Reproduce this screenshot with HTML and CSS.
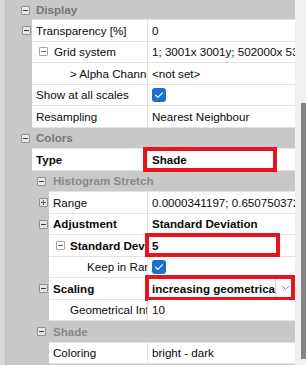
FILE: index.html
```html
<!DOCTYPE html>
<html>
<head>
<meta charset="utf-8">
<link rel="stylesheet" href="styles.css">
</head>
<body>
<div class="frame">
  <div class="grid">
    <div class="row hdr top">
      <div class="gut g32"><span class="exp i21"></span></div>
      <div class="hcell">Display</div>
    </div>
    <div class="row">
      <div class="gut g32"><span class="exp i22"></span></div>
      <div class="name w32 p4">Transparency [%]</div>
      <div class="value"><span class="txt">0</span></div>
    </div>
    <div class="row">
      <div class="gut g32"></div>
      <div class="name w32 p7"><span class="exp lt"></span><span class="lbl g6">Grid system</span></div>
      <div class="value"><span class="txt">1; 3001x 3001y; 502000x 532000y</span></div>
    </div>
    <div class="row">
      <div class="gut g32"></div>
      <div class="name w32 p38">&gt; Alpha Channel</div>
      <div class="value"><span class="txt">&lt;not set&gt;</span></div>
    </div>
    <div class="row">
      <div class="gut g32"></div>
      <div class="name w32 p4">Show at all scales</div>
      <div class="value"><span class="chk"><svg width="14" height="14" viewBox="0 0 14 14"><path d="M3.6 7.2 L5.9 9.4 L10.4 4.8" fill="none" stroke="#fff" stroke-width="1.2" stroke-linecap="round" stroke-linejoin="round"/></svg></span></div>
    </div>
    <div class="row">
      <div class="gut g32"></div>
      <div class="name w32 p4">Resampling</div>
      <div class="value"><span class="txt">Nearest Neighbour</span></div>
    </div>
    <div class="row hdr">
      <div class="gut g32"><span class="exp i21"></span></div>
      <div class="hcell">Colors</div>
    </div>
    <div class="row">
      <div class="gut g32"></div>
      <div class="name w32 p4 b">Type</div>
      <div class="value"><span class="txt b">Shade</span><span class="hl hl-type"></span></div>
    </div>
    <div class="row hdr">
      <div class="gut g49"><span class="exp i37"></span></div>
      <div class="hcell sub">Histogram Stretch</div>
    </div>
    <div class="row">
      <div class="gut g49"><span class="exp plus i39"></span></div>
      <div class="name w49 p4">Range</div>
      <div class="value"><span class="txt">0.0000341197; 0.650750372</span></div>
    </div>
    <div class="row">
      <div class="gut g49"><span class="exp i39"></span></div>
      <div class="name w49 p4 b">Adjustment</div>
      <div class="value"><span class="txt b">Standard Deviation</span></div>
    </div>
    <div class="row">
      <div class="gut g49"></div>
      <div class="name w49 p7 b"><span class="exp lt"></span><span class="lbl g5">Standard Deviation</span></div>
      <div class="value"><span class="txt b">5</span><span class="hl hl-std"></span></div>
    </div>
    <div class="row">
      <div class="gut g49"></div>
      <div class="name w49 p38">Keep in Range</div>
      <div class="value"><span class="chk"><svg width="14" height="14" viewBox="0 0 14 14"><path d="M3.6 7.2 L5.9 9.4 L10.4 4.8" fill="none" stroke="#fff" stroke-width="1.2" stroke-linecap="round" stroke-linejoin="round"/></svg></span></div>
    </div>
    <div class="row">
      <div class="gut g49"><span class="exp i39"></span></div>
      <div class="name w49 p4 b">Scaling</div>
      <div class="value"><span class="txt b">increasing geometrical</span><span class="dd"><svg width="9" height="6" viewBox="0 0 9 6"><path d="M1 1 L4.5 4.5 L8 1" fill="none" stroke="#8a8a8a" stroke-width="1"/></svg></span><span class="hl hl-scl"></span></div>
    </div>
    <div class="row">
      <div class="gut g49"></div>
      <div class="name w49 p21">Geometrical Interval</div>
      <div class="value"><span class="txt">10</span></div>
    </div>
    <div class="row hdr">
      <div class="gut g49"><span class="exp i37"></span></div>
      <div class="hcell sub">Shade</div>
    </div>
    <div class="row">
      <div class="gut g49"></div>
      <div class="name w49 p4">Coloring</div>
      <div class="value"><span class="txt">bright - dark</span></div>
    </div>
  </div>
  <div class="scroll"><div class="thumb"></div></div>
</div>
</body>
</html>
```
FILE: styles.css
```css
html, body { margin: 0; padding: 0; }
body {
  width: 306px;
  height: 365px;
  overflow: hidden;
  font-family: "Liberation Sans", Arial, sans-serif;
  font-size: 11.6px;
  color: #0a0a0a;
  background: #c8c8c8;
}
.frame { display: flex; height: 365px; }
.grid {
  width: 295px;
  flex: none;
  display: flex;
  flex-direction: column;
  background: linear-gradient(to right, #d8d8d8 0 5px, #bdbdbd 5px 6px, #c8c8c8 6px);
}
.scroll {
  width: 11px;
  flex: none;
  background: #f0f0f0;
  display: flex;
  flex-direction: column;
  padding: 103px 0 0 6px;
  box-sizing: border-box;
}
.thumb { height: 256px; background: #868686; }

.row { display: flex; height: 21.5px; flex: none; }
.row.top { height: 20px; }

.gut { flex: none; display: flex; align-items: center; }
.g32 { width: 32px; }
.g49 { width: 49px; }
.i21 { margin-left: 21px; }
.i22 { margin-left: 22px; }
.i37 { margin-left: 37px; }
.i39 { margin-left: 39px; }

.name {
  flex: none;
  box-sizing: border-box;
  background: #fff;
  border-right: 1px solid #e3e3e3;
  border-bottom: 1px solid #e3e3e3;
  display: flex;
  align-items: center;
  white-space: nowrap;
  overflow: hidden;
}
.w32 { width: 116px; }
.w49 { width: 99px; }
.p4 { padding-left: 4px; }
.p7 { padding-left: 7px; }
.p21 { padding-left: 21px; }
.p38 { padding-left: 38px; }
.g5 { margin-left: 5px; }
.g6 { margin-left: 6px; }
.lbl { white-space: nowrap; }
.b { font-weight: 700; }

.value {
  flex: 1;
  min-width: 0;
  box-sizing: border-box;
  background: #fff;
  border-bottom: 1px solid #e3e3e3;
  display: flex;
  align-items: center;
  padding-left: 4px;
  position: relative;
}
.txt { flex: 1; min-width: 0; white-space: nowrap; overflow: hidden; }

.hdr .hcell {
  flex: 1;
  display: flex;
  align-items: center;
  padding-left: 4px;
  font-weight: 700;
  color: #777777;
  border-bottom: 1px solid #e3e3e3;
}
.hdr .hcell.sub { color: #888888; }

.exp {
  flex: none;
  width: 9px;
  height: 9px;
  box-sizing: border-box;
  border: 1px solid #909090;
  background: #e6e6e6;
  border-radius: 1px;
  position: relative;
}
.exp::before {
  content: "";
  position: absolute;
  left: 1px;
  top: 3px;
  width: 5px;
  height: 1px;
  background: #3a3a3a;
}
.exp.plus::after {
  content: "";
  position: absolute;
  left: 3px;
  top: 1px;
  width: 1px;
  height: 5px;
  background: #3d5a8a;
}
.exp.plus::before { background: #3d5a8a; }
.exp.lt { background: #fff; border-color: #a6a6a6; }
.exp.lt::before { background: #666; }

.chk {
  width: 14px;
  height: 14px;
  border-radius: 3px;
  background: #1b6fcd;
  display: block;
}
.chk svg { display: block; }

.dd {
  flex: none;
  width: 20px;
  height: 100%;
  box-sizing: border-box;
  border-left: 1px solid #dadada;
  display: flex;
  align-items: center;
  justify-content: center;
}

.hl {
  position: absolute;
  box-sizing: border-box;
  border: 4px solid #e8131c;
  pointer-events: none;
}
.hl-type { left: -5px; top: -2px; width: 134px; height: 25px; }
.hl-std { left: -3px; top: -2px; width: 135px; height: 24px; }
.hl-scl { left: -3px; top: -3px; width: 150px; height: 26px; }
```
